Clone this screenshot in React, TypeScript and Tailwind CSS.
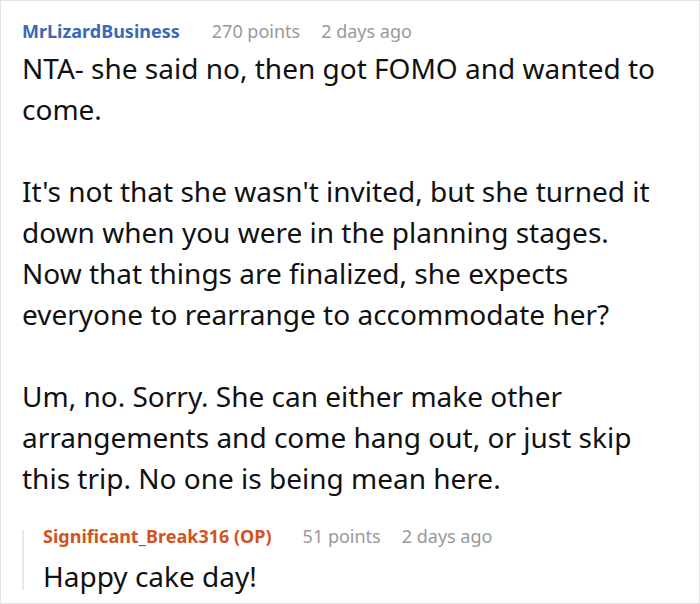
export default function App() {
  return (
    <div
      className="w-[700px] h-[604px] border border-[#e2e2e2] bg-white pl-[21px] pr-[38px] pt-[17px] overflow-hidden"
      style={{ fontFamily: '"Noto Sans", "Open Sans", sans-serif' }}
    >
      <div className="flex items-baseline text-[18px] leading-[26px]">
        <span className="font-bold text-[#3a69b5]">MrLizardBusiness</span>
        <span className="ml-[32px] text-[#999999]">270 points</span>
        <span className="ml-[21px] text-[#999999]">2 days ago</span>
      </div>

      <div className="mt-[4px] text-[28px] leading-[41px] text-[#111111]">
        <p>NTA- she said no, then got FOMO and wanted to come.</p>
        <p className="mt-[41px]">
          It's not that she wasn't invited, but she turned it down when you
          were in the planning stages. Now that things are finalized, she
          expects everyone to rearrange to accommodate her?
        </p>
        <p className="mt-[41px]">
          Um, no. Sorry. She can either make other arrangements and come hang
          out, or just skip this trip. No one is being mean here.
        </p>
      </div>

      <div className="mt-[31px] border-l-2 border-[#e8e8e8] pl-[19px]">
        <div className="flex items-baseline text-[18px] leading-[12px]">
          <span className="font-bold text-[#d4521e]">
            Significant_Break316 (OP)
          </span>
          <span className="ml-[31px] text-[#999999]">51 points</span>
          <span className="ml-[21px] text-[#999999]">2 days ago</span>
        </div>
        <p className="mt-[20px] text-[28px] leading-[28px] text-[#111111]">
          Happy cake day!
        </p>
      </div>
    </div>
  );
}
